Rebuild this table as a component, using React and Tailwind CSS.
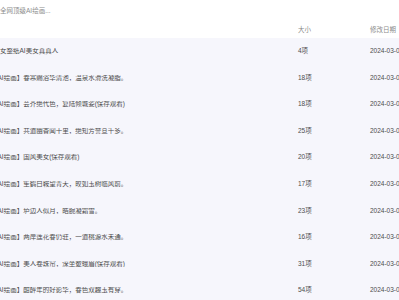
const rows = [
  { name: '女整纸AI美女真真人', size: '4项', cut: false },
  { name: '【AI绘画】春寒赐浴华清池，温泉水滑洗凝脂。', size: '18项', cut: true },
  { name: '【AI绘画】芸芥绝代色，复陆倾城姿(保存观看)', size: '18项', cut: true },
  { name: '【AI绘画】共道幽香闻十里，绝知芳誉亘千多。', size: '25项', cut: true },
  { name: '【AI绘画】国风美女(保存观看)', size: '20项', cut: true },
  { name: '【AI绘画】笙鹤白鞍望青天，皎如玉树临风前。', size: '17项', cut: true },
  { name: '【AI绘画】垆边人似月，皓腕凝霜雪。', size: '23项', cut: true },
  { name: '【AI绘画】两岸莲花春仍驻，一道桃源水未通。', size: '16项', cut: true },
  { name: '【AI绘画】美人卷珠帘，深坐颦蛾眉(保存观看)', size: '31项', cut: true },
  { name: '【AI绘画】酣醉年的好影华，春色双趣玉有穿。', size: '54项', cut: true },
]

export default function App() {
  return (
    <div
      className="w-[399px] h-[300px] overflow-hidden bg-white text-[6.5px] leading-none"
      style={{ fontFamily: '"Liberation Sans", "Noto Sans CJK SC", sans-serif' }}
    >
      <div className="h-[22px] flex items-center text-[#8c8c8c]">全网顶级AI绘画...</div>
      <div className="h-[16px] flex items-center text-[#8c8c8c]">
        <div className="w-[298px] shrink-0" />
        <div className="w-[72px] shrink-0">大小</div>
        <div className="shrink-0 whitespace-nowrap">修改日期</div>
      </div>
      <div className="bg-[#f6f6fc]">
        {rows.map((r, i) => (
          <div key={i} className="h-[26.6px] flex items-center text-[#4d4d4d] whitespace-nowrap">
            <div className="w-[298px] shrink-0 overflow-hidden">
              <span className={r.cut ? 'ml-[-9px] inline-block' : 'inline-block'}>{r.name}</span>
            </div>
            <div className="w-[72px] shrink-0">{r.size}</div>
            <div className="shrink-0">2024-03-06 14:21</div>
          </div>
        ))}
      </div>
    </div>
  )
}
